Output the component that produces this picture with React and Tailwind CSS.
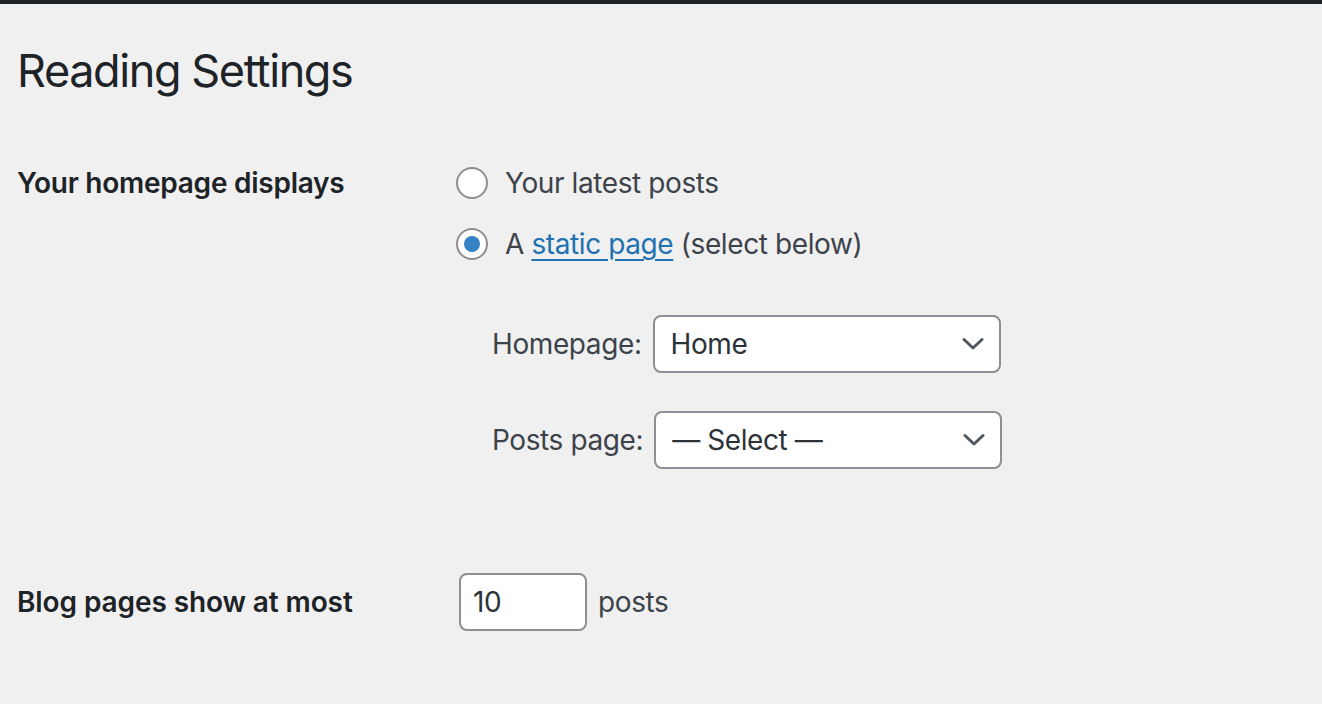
import { useState } from "react";

const font = { fontFamily: "Inter, 'Noto Sans', sans-serif" };

const Chevron = () => (
  <svg width="22" height="14" viewBox="0 0 22 14" fill="none" className="shrink-0">
    <path d="M2 2.5l9 8.5 9-8.5" stroke="#50575e" strokeWidth="3" strokeLinecap="round" strokeLinejoin="round" />
  </svg>
);

const Radio = ({ checked, onClick }) => (
  <button
    type="button"
    onClick={onClick}
    className="w-[32px] h-[32px] rounded-full border-2 border-[#8c8f94] bg-white flex items-center justify-center shrink-0"
  >
    {checked && <span className="w-[16px] h-[16px] rounded-full bg-[#3582c4]" />}
  </button>
);

const Select = ({ value }) => (
  <div className="w-[348px] h-[58px] rounded-[8px] border-2 border-[#8c8f94] bg-white flex items-center justify-between pl-[16px] pr-[15px] text-[28px] text-[#2c3338]">
    <span>{value}</span>
    <Chevron />
  </div>
);

export default function App() {
  const [choice, setChoice] = useState("page");

  return (
    <div className="min-h-screen bg-[#f0f0f1] tracking-[-0.4px]" style={font}>
      <div className="h-[4px] bg-[#1d2327]" />
      <div className="pl-[17px]">
        <h1 className="mt-[39px] text-[45px] leading-[56px] font-normal tracking-[-1.4px] text-[#1d2327]">
          Reading Settings
        </h1>

        {/* Homepage displays */}
        <div className="flex mt-[64px]">
          <div className="w-[439px] h-[40px] flex items-center text-[28px] font-semibold tracking-[-0.25px] text-[#1d2327]">
            Your homepage displays
          </div>
          <div className="flex flex-col">
            <label className="h-[40px] flex items-center gap-[17px] text-[28px] text-[#3c434a]">
              <Radio checked={choice === "posts"} onClick={() => setChoice("posts")} />
              <span>Your latest posts</span>
            </label>
            <label className="mt-[21px] h-[40px] flex items-center gap-[17px] text-[28px] text-[#3c434a]">
              <Radio checked={choice === "page"} onClick={() => setChoice("page")} />
              <span>
                A{" "}
                <a href="#" className="text-[#2271b1] underline underline-offset-[5px] decoration-[2px]">
                  static page
                </a>{" "}
                (select below)
              </span>
            </label>

            <div className="ml-[36px] mt-[51px] flex items-center gap-[11px] text-[28px] text-[#3c434a]">
              <span>Homepage:</span>
              <Select value="Home" />
            </div>
            <div className="ml-[36px] mt-[38px] flex items-center gap-[11px] text-[28px] text-[#3c434a]">
              <span>Posts page:</span>
              <Select value="— Select —" />
            </div>
          </div>
        </div>

        {/* Blog pages */}
        <div className="flex items-center mt-[104px]">
          <div className="w-[442px] text-[28px] font-semibold tracking-[-0.1px] text-[#1d2327]">
            Blog pages show at most
          </div>
          <div className="w-[128px] h-[58px] rounded-[8px] border-2 border-[#8c8f94] bg-white flex items-center pl-[12px] text-[28px] text-[#2c3338]">
            10
          </div>
          <span className="ml-[11px] text-[28px] text-[#3c434a]">posts</span>
        </div>
      </div>
    </div>
  );
}
